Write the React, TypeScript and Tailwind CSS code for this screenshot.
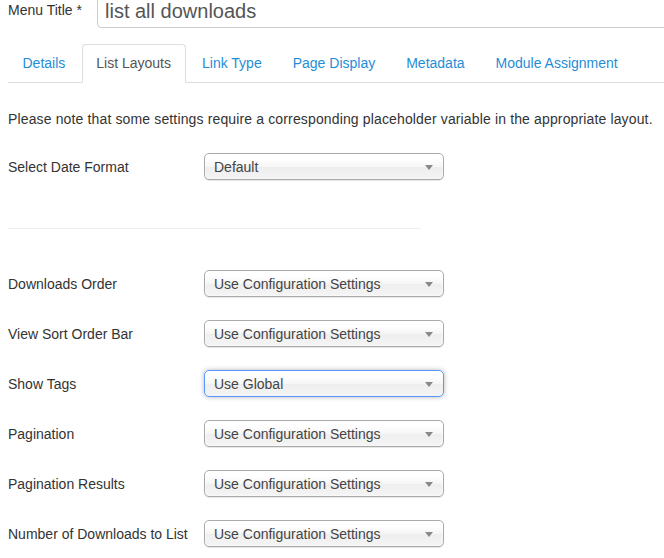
import React from "react";

const tabs = ["Details", "List Layouts", "Link Type", "Page Display", "Metadata", "Module Assignment"];

function Select({ value, active = false }: { value: string; active?: boolean }) {
  return (
    <div
      className={
        "relative flex h-[27px] w-[240px] shrink-0 items-center rounded-[5px] border pl-[9px] text-[14px] text-[#444] bg-[linear-gradient(#ffffff_20%,#f6f6f6_50%,#eeeeee_52%,#f4f4f4_100%)] " +
        (active
          ? "border-[#5897fb] shadow-[0_0_5px_rgba(0,0,0,0.3)]"
          : "border-[#aaaaaa] shadow-[inset_0_0_3px_#ffffff,0_1px_1px_rgba(0,0,0,0.1)]")
      }
    >
      <span className="leading-[18px]">{value}</span>
      <span className="absolute right-[10px] top-[11px] h-0 w-0 border-x-[4px] border-t-[5px] border-x-transparent border-t-[#888]" />
    </div>
  );
}

function Row({ label, value, active }: { label: string; value: string; active?: boolean }) {
  return (
    <div className="flex items-center">
      <div className="w-[196px] shrink-0 whitespace-nowrap pt-[1px] text-[14px] leading-[18px] text-[#333]">{label}</div>
      <Select value={value} active={active} />
    </div>
  );
}

export default function App() {
  return (
    <div
      className="h-[558px] w-[664px] overflow-hidden bg-white pl-[8px]"
      style={{ fontFamily: '"Liberation Sans", Arial, sans-serif' }}
    >
      <div className="flex h-[28px] items-start">
        <div className="w-[89px] shrink-0 whitespace-nowrap pt-[2px] text-[14px] leading-[16px] text-[#333]">Menu Title *</div>
        <div className="-mt-[8px] flex h-[36px] w-[600px] shrink-0 items-end rounded-[4px] border border-[#cccccc] pb-[5px] pl-[7px] text-[20px] leading-[22px] text-[#555]">
          list all downloads
        </div>
      </div>

      <ul className="mt-[16px] flex w-[700px] border-b border-[#dddddd]">
        {tabs.map((t, i) => (
          <li key={t} className="-mb-px mr-[2px]">
            <div
              className={
                "rounded-t-[4px] border px-[13.5px] py-[9px] text-[14px] leading-[19px] " +
                (i === 1
                  ? "border-[#dddddd] border-b-white bg-white text-[#555]"
                  : "border-transparent text-[#1f8dd6]")
              }
            >
              {t}
            </div>
          </li>
        ))}
      </ul>

      <p className="mt-[26px] whitespace-nowrap text-[14px] leading-[20px] tracking-[0.14px] text-[#333]">
        Please note that some settings require a corresponding placeholder variable in the appropriate layout.
      </p>

      <div className="mt-[24px]">
        <Row label="Select Date Format" value="Default" />
      </div>

      <div className="mt-[48px] h-px w-[413px] bg-[#eeeeee]" />

      <div className="mt-[41px] flex flex-col gap-[23px]">
        <Row label="Downloads Order" value="Use Configuration Settings" />
        <Row label="View Sort Order Bar" value="Use Configuration Settings" />
        <Row label="Show Tags" value="Use Global" active />
        <Row label="Pagination" value="Use Configuration Settings" />
        <Row label="Pagination Results" value="Use Configuration Settings" />
        <Row label="Number of Downloads to List" value="Use Configuration Settings" />
      </div>
    </div>
  );
}
